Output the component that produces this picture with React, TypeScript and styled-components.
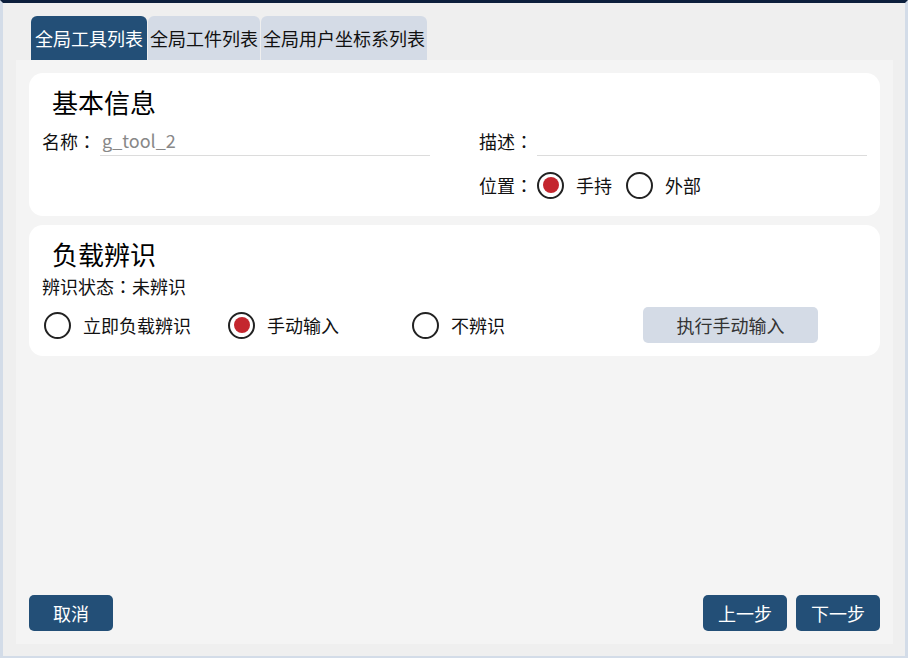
import React, { useState } from "react";
import styled, { createGlobalStyle } from "styled-components";

const GlobalStyle = createGlobalStyle`
  html, body {
    margin: 0;
    padding: 0;
    background: #d5dde8;
  }
  * { box-sizing: border-box; }
  body {
    font-family: "Noto Sans CJK SC", "Noto Sans", sans-serif;
    color: #111;
  }
`;

const Frame = styled.div`
  width: 908px;
  height: 658px;
  border-top: 3px solid #0c1f3c;
  border-left: 3px solid #d3dce8;
  border-right: 3px solid #d3dce8;
  border-bottom: 2px solid #d3dce8;
  background: #efefef;
  padding: 13px 12px 12px 13px;
  display: flex;
  flex-direction: column;
`;

const TabBar = styled.div`
  display: flex;
  gap: 1px;
  padding-left: 15px;
  height: 44px;
  flex-shrink: 0;
`;

const Tab = styled.button<{ $active?: boolean }>`
  border: none;
  margin: 0;
  font-family: inherit;
  font-size: 18px;
  line-height: 44px;
  height: 44px;
  padding: 0 ${(p) => (p.$active ? 4 : 2)}px;
  border-radius: 6px 6px 0 0;
  background: ${(p) => (p.$active ? "#234f77" : "#d4dbe6")};
  color: ${(p) => (p.$active ? "#ffffff" : "#111111")};
  cursor: pointer;
  white-space: nowrap;
`;

const Panel = styled.div`
  flex: 1;
  background: #f4f4f4;
  padding: 13px;
  display: flex;
  flex-direction: column;
`;

const Card = styled.section<{ $pt: number; $pb: number }>`
  background: #ffffff;
  border-radius: 14px;
  padding: ${(p) => p.$pt}px 13px ${(p) => p.$pb}px 13px;
  & + & {
    margin-top: 9px;
  }
`;

const CardTitle = styled.h2`
  margin: 0;
  padding-left: 10px;
  font-size: 26px;
  font-weight: 400;
  line-height: 34px;
  color: #000;
`;

const FieldGrid = styled.div`
  display: grid;
  grid-template-columns: 388px 388px;
  column-gap: 49px;
  row-gap: 15px;
  margin-top: 6px;
`;

const Field = styled.div`
  display: flex;
  align-items: center;
  height: 31px;
`;

const RadioField = styled.div`
  display: flex;
  align-items: center;
  height: 28px;
`;

const Label = styled.span`
  font-size: 18px;
  line-height: 24px;
  white-space: nowrap;
  width: 58px;
  flex-shrink: 0;
`;

const Colon = styled.span`
  display: inline-block;
  width: 1em;
  text-align: center;
  font-family: "Noto Sans CJK TC", "Noto Sans CJK SC", sans-serif;
`;

const TextInput = styled.input`
  flex: 1;
  min-width: 0;
  height: 31px;
  border: none;
  border-bottom: 1px solid #dcdcdc;
  outline: none;
  font-family: inherit;
  font-size: 18px;
  color: #888;
  padding: 0 2px;
  background: transparent;
  &::placeholder { color: #aaa; }
`;

const RadioLabel = styled.label<{ $w?: number }>`
  display: inline-flex;
  align-items: center;
  gap: 12px;
  cursor: pointer;
  font-size: 18px;
  line-height: 24px;
  white-space: nowrap;
  ${(p) => (p.$w ? `width: ${p.$w}px;` : "margin-right: 14px;")}
  flex-shrink: 0;
`;

const RadioCircle = styled.span<{ $checked: boolean }>`
  width: 27px;
  height: 27px;
  border-radius: 50%;
  border: 2.5px solid #222;
  display: inline-flex;
  align-items: center;
  justify-content: center;
  flex-shrink: 0;
  &::after {
    content: "";
    width: 16px;
    height: 16px;
    border-radius: 50%;
    background: ${(p) => (p.$checked ? "#c4262e" : "transparent")};
  }
`;

const Status = styled.div`
  font-size: 18px;
  line-height: 24px;
  margin-top: 3px;
`;

const ActionRow = styled.div`
  display: flex;
  align-items: center;
  height: 36px;
  margin-top: 9px;
  padding-left: 2px;
`;

const GhostButton = styled.button`
  width: 175px;
  height: 36px;
  border: none;
  border-radius: 5px;
  background: #d4dbe6;
  color: #333;
  font-family: inherit;
  font-size: 18px;
  cursor: pointer;
`;

const Footer = styled.div`
  margin-top: auto;
  display: flex;
  align-items: center;
  gap: 9px;
`;

const Spacer = styled.div`
  flex: 1;
`;

const PrimaryButton = styled.button`
  width: 84px;
  height: 36px;
  border: none;
  border-radius: 5px;
  background: #234f77;
  color: #fff;
  font-family: inherit;
  font-size: 18px;
  cursor: pointer;
`;

function Radio({
  checked,
  label,
  width,
  onSelect,
}: {
  checked: boolean;
  label: string;
  width?: number;
  onSelect: () => void;
}) {
  return (
    <RadioLabel $w={width} onClick={onSelect}>
      <RadioCircle $checked={checked} />
      <span>{label}</span>
    </RadioLabel>
  );
}

export default function App() {
  const [tab, setTab] = useState(0);
  const [pos, setPos] = useState("hand");
  const [ident, setIdent] = useState("manual");
  const tabs = ["全局工具列表", "全局工件列表", "全局用户坐标系列表"];

  return (
    <>
      <GlobalStyle />
      <Frame>
        <TabBar>
          {tabs.map((t, i) => (
            <Tab key={t} $active={i === tab} onClick={() => setTab(i)}>
              {t}
            </Tab>
          ))}
        </TabBar>
        <Panel>
          <Card $pt={12} $pb={17}>
            <CardTitle>基本信息</CardTitle>
            <FieldGrid>
              <Field>
                <Label>名称<Colon>：</Colon></Label>
                <TextInput defaultValue="g_tool_2" />
              </Field>
              <Field>
                <Label>描述<Colon>：</Colon></Label>
                <TextInput defaultValue="" />
              </Field>
              <div />
              <RadioField>
                <Label>位置<Colon>：</Colon></Label>
                <Radio checked={pos === "hand"} label="手持" onSelect={() => setPos("hand")} />
                <Radio checked={pos === "ext"} label="外部" onSelect={() => setPos("ext")} />
              </RadioField>
            </FieldGrid>
          </Card>
          <Card $pt={12} $pb={13}>
            <CardTitle>负载辨识</CardTitle>
            <Status>辨识状态<Colon>：</Colon>未辨识</Status>
            <ActionRow>
              <Radio width={184} checked={ident === "now"} label="立即负载辨识" onSelect={() => setIdent("now")} />
              <Radio width={184} checked={ident === "manual"} label="手动输入" onSelect={() => setIdent("manual")} />
              <Radio width={231} checked={ident === "none"} label="不辨识" onSelect={() => setIdent("none")} />
              <GhostButton>执行手动输入</GhostButton>
            </ActionRow>
          </Card>
          <Footer>
            <PrimaryButton>取消</PrimaryButton>
            <Spacer />
            <PrimaryButton>上一步</PrimaryButton>
            <PrimaryButton>下一步</PrimaryButton>
          </Footer>
        </Panel>
      </Frame>
    </>
  );
}
